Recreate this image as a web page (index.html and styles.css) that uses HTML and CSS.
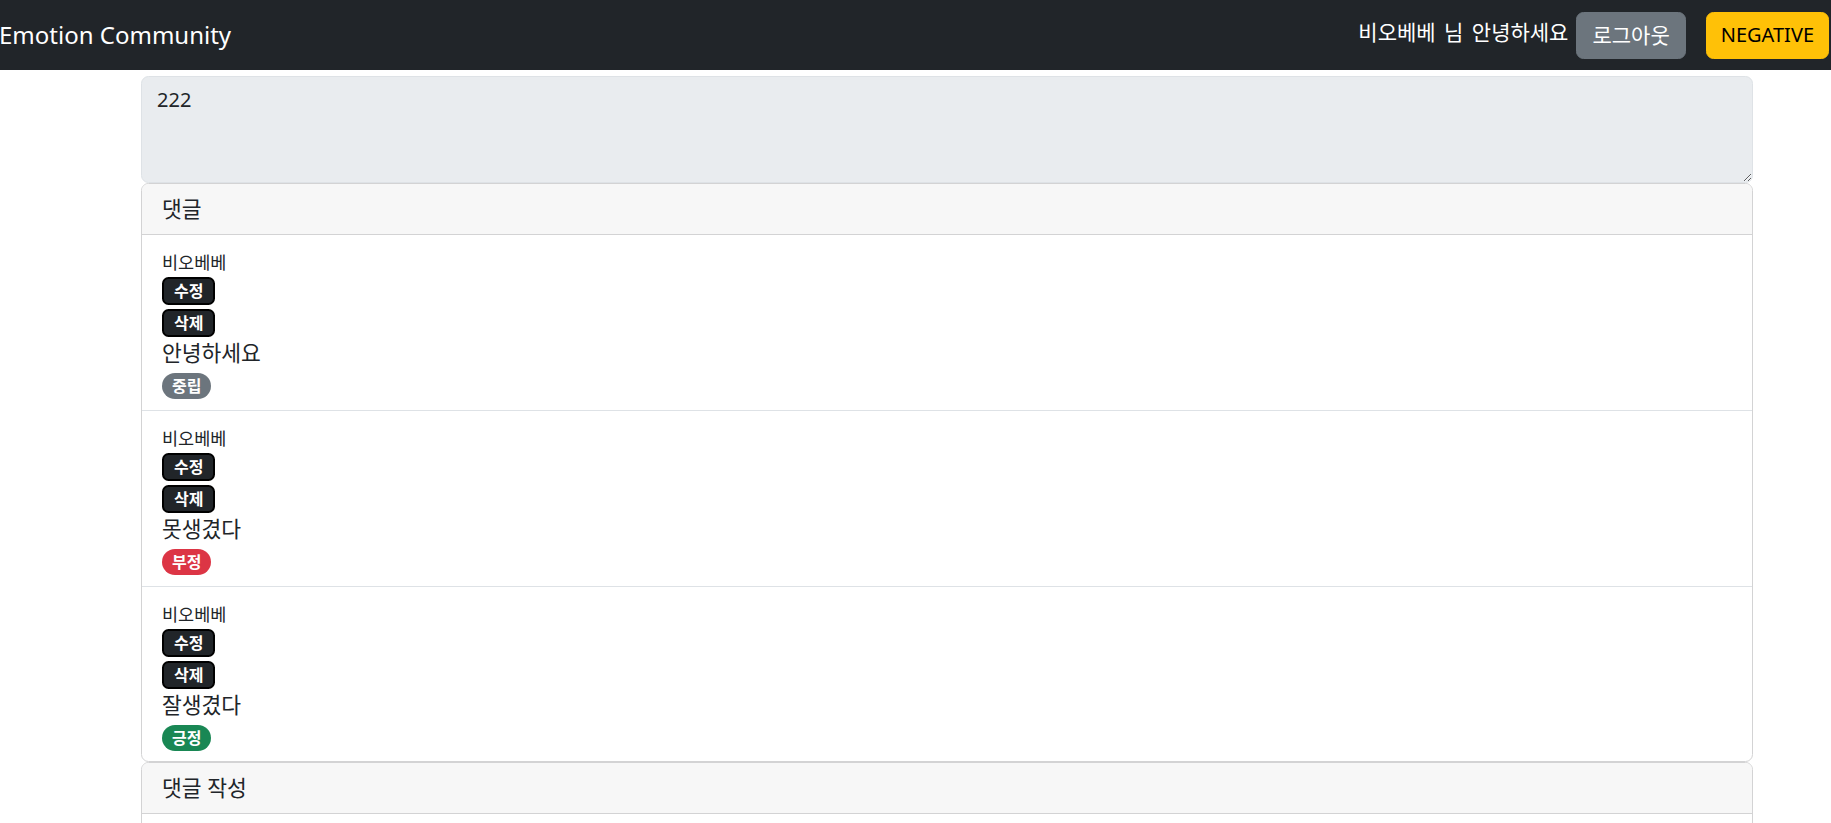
FILE: index.html
```html
<!DOCTYPE html>
<html lang="ko">
<head>
<meta charset="utf-8">
<title>Emotion Community</title>
<link rel="stylesheet" href="styles.css">
</head>
<body>
<nav class="navbar">
  <a class="brand" href="#">Emotion Community</a>
  <div class="nav-right">
    <span class="greeting">비오베베 님 안녕하세요</span>
    <button class="btn btn-secondary" type="button">로그아웃</button>
    <button class="btn btn-warning" type="button">NEGATIVE</button>
  </div>
</nav>
<main class="container">
  <textarea class="post-body" rows="3" readonly>222</textarea>
  <section class="card">
    <div class="card-header">댓글</div>
    <ul class="comment-list">
      <li class="comment">
        <div class="author">비오베베</div>
        <button class="action" type="button">수정</button>
        <button class="action action-gap" type="button">삭제</button>
        <div class="content">안녕하세요</div>
        <span class="tag tag-neutral">중립</span>
      </li>
      <li class="comment">
        <div class="author">비오베베</div>
        <button class="action" type="button">수정</button>
        <button class="action action-gap" type="button">삭제</button>
        <div class="content">못생겼다</div>
        <span class="tag tag-negative">부정</span>
      </li>
      <li class="comment">
        <div class="author">비오베베</div>
        <button class="action" type="button">수정</button>
        <button class="action action-gap" type="button">삭제</button>
        <div class="content">잘생겼다</div>
        <span class="tag tag-positive">긍정</span>
      </li>
    </ul>
  </section>
  <section class="card">
    <div class="card-header">댓글 작성</div>
    <div class="card-body">
      <textarea class="write-box" rows="3"></textarea>
      <button class="btn btn-primary" type="button">작성</button>
    </div>
  </section>
</main>
</body>
</html>
```
FILE: styles.css
```css
* { box-sizing: border-box; }

body {
  margin: 0;
  font-family: "Noto Sans", "Noto Sans CJK KR", sans-serif;
  font-size: 20px;
  color: #212529;
  background: #fff;
}

.navbar {
  height: 70px;
  background: #212529;
  display: flex;
  align-items: center;
  justify-content: space-between;
  padding: 0 2px 0 0;
}

.brand {
  color: #fff;
  text-decoration: none;
  font-size: 24px;
  line-height: 36px;
  margin-left: -1px;
}

.nav-right {
  display: flex;
  align-items: center;
}

.greeting {
  color: #fff;
  font-size: 21px;
  line-height: 30px;
  word-spacing: 3px;
  margin-right: 8px;
  position: relative;
  top: -3px;
}

.btn {
  font-family: inherit;
  font-size: 20px;
  line-height: 30px;
  padding: 7.5px 15px;
  border: 1px solid transparent;
  border-radius: 7.5px;
  cursor: pointer;
}

.btn-secondary {
  background: #6c757d;
  border-color: #6c757d;
  color: #fff;
  font-size: 21px;
  padding: 7.5px 15px;
  margin-right: 20px;
}

.btn-warning {
  background: #ffc107;
  border-color: #ffc107;
  color: #000;
  padding: 7.5px 14px;
}

.btn-primary {
  background: #0d6efd;
  border-color: #0d6efd;
  color: #fff;
}

.container {
  margin: 6px 0 0 141px;
  width: 1612px;
}

.post-body {
  display: block;
  width: 100%;
  margin: 0;
  font-family: inherit;
  font-size: 20px;
  line-height: 30px;
  padding: 7.5px 15px;
  color: #212529;
  background: #e9ecef;
  border: 1px solid #dee2e6;
  border-radius: 7.5px;
  resize: vertical;
  height: 107px;
}

.card {
  border: 1px solid #d3d3d4;
  border-radius: 7.5px;
  overflow: hidden;
}

.card-header {
  background: #f7f7f7;
  border-bottom: 1px solid #d3d3d4;
  padding: 10px 20px;
  font-size: 21.5px;
  line-height: 30px;
}

.comment-list {
  list-style: none;
  margin: 0;
  padding: 0;
}

.comment {
  display: flex;
  flex-direction: column;
  align-items: flex-start;
  padding: 10px 20px 11px;
  border-bottom: 1px solid #dee2e6;
}

.comment:last-child {
  border-bottom: none;
  padding-bottom: 10px;
}

.author {
  font-size: 17.5px;
  line-height: 27px;
  margin-top: 4px;
}

.action {
  display: inline-flex;
  align-items: center;
  justify-content: center;
  height: 28px;
  margin-top: 1px;
  padding: 0 10px;
  background: #212529;
  color: #fff;
  border: 2px solid #000;
  border-radius: 6.5px;
  font-family: inherit;
  font-size: 16px;
  font-weight: 700;
  line-height: 1;
}

.action-gap { margin-top: 4px; }

.content {
  font-size: 21.5px;
  line-height: 32px;
}

.tag {
  display: inline-flex;
  align-items: center;
  height: 26px;
  margin-top: 4px;
  padding: 0 10px;
  border-radius: 999px;
  color: #fff;
  font-size: 16px;
  font-weight: 700;
  line-height: 1;
}

.tag-neutral { background: #6c757d; }
.tag-negative { background: #dc3545; }
.tag-positive { background: #198754; }

.card-body {
  padding: 20px;
}

.write-box {
  display: block;
  width: 100%;
  height: 107px;
  margin-bottom: 12px;
  font-family: inherit;
  font-size: 20px;
  border: 1px solid #dee2e6;
  border-radius: 7.5px;
}
```
